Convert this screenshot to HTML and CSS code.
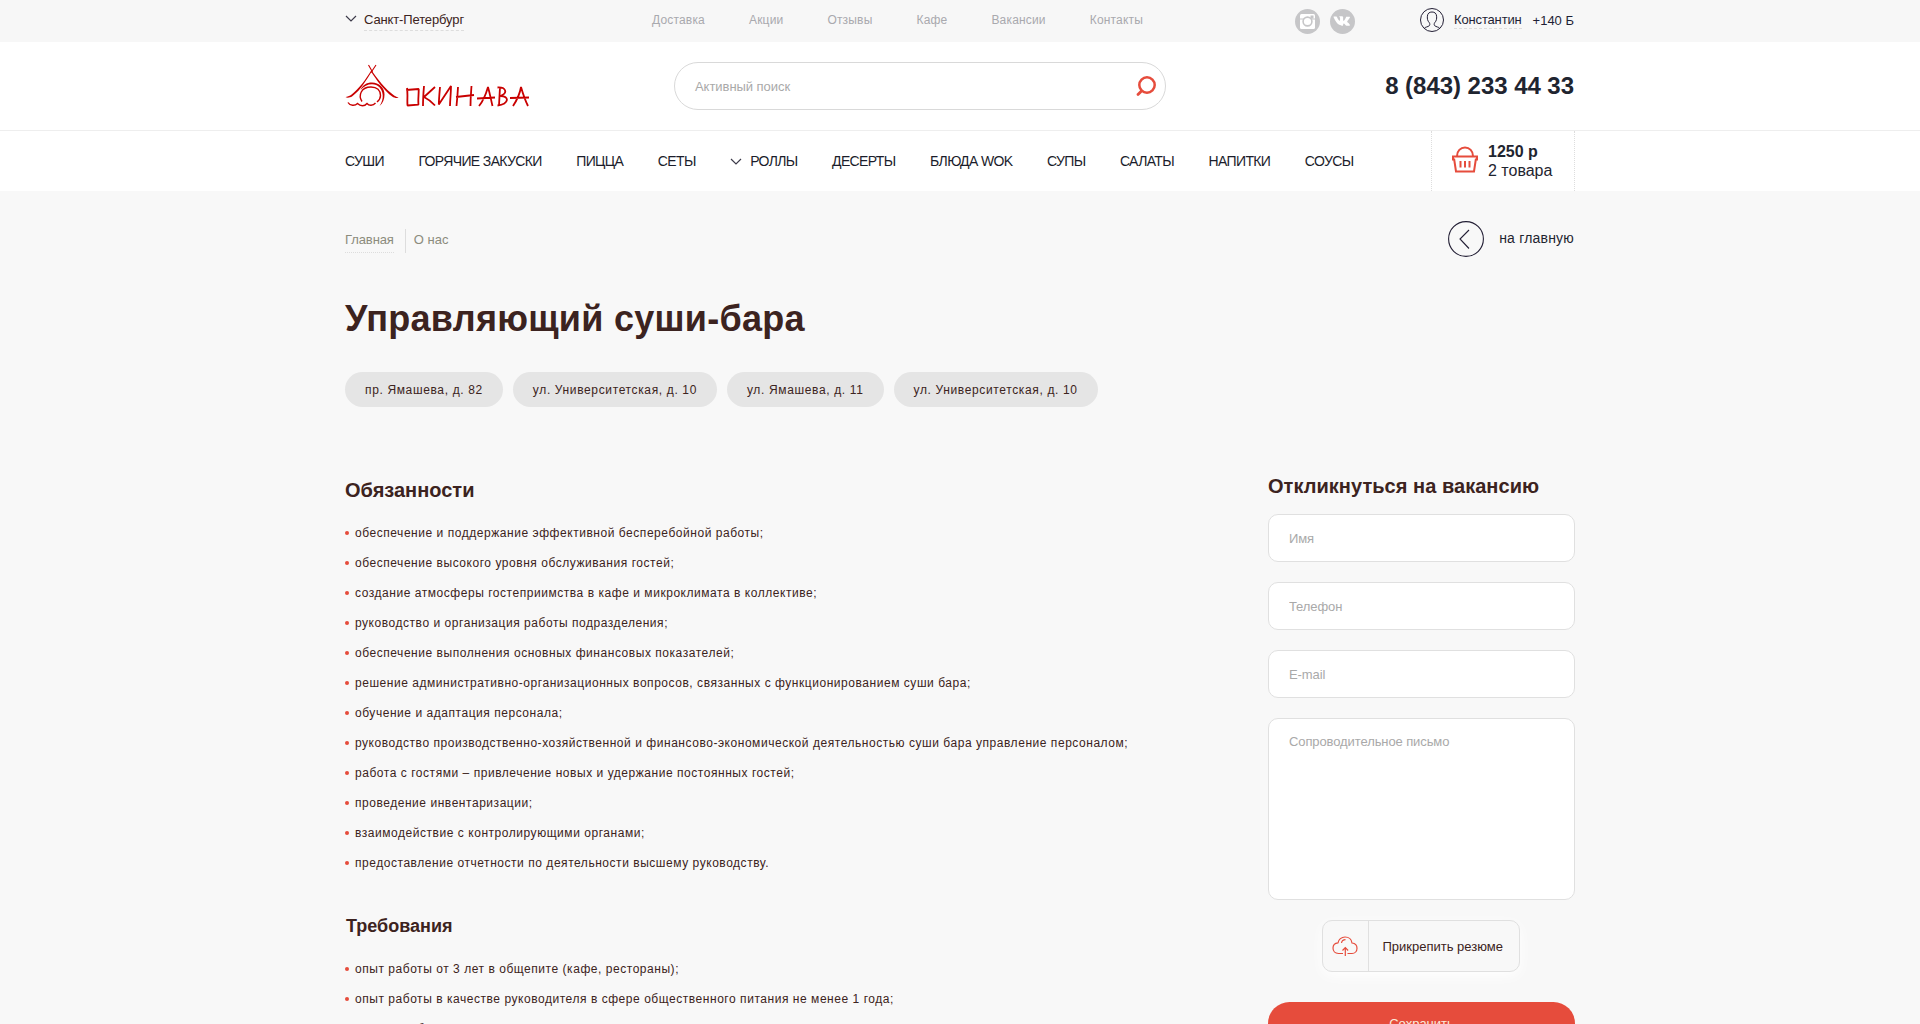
FILE: index.html
```html
<!DOCTYPE html>
<html lang="ru">
<head>
<meta charset="utf-8">
<title>Управляющий суши-бара</title>
<link rel="stylesheet" href="styles.css">
</head>
<body>
<div class="topbar">
  <div class="wrap topbar-row">
    <a class="city"><svg class="chev" width="12" height="8" viewBox="0 0 12 8"><path d="M1 1l5 5 5-5"/></svg><span class="city-name">Санкт-Петербург</span></a>
    <nav class="topnav"><a>Доставка</a><a>Акции</a><a>Отзывы</a><a>Кафе</a><a>Вакансии</a><a>Контакты</a></nav>
    <div class="social">
      <svg width="25" height="25" viewBox="0 0 25 25"><circle cx="12.5" cy="12.5" r="12.5" fill="#c6c6c8"/><rect x="5" y="5" width="15" height="15" rx="1.500" fill="#fff"/><path d="M5 10h4M16 10h4" stroke="#c6c6c8" stroke-width="1"/><circle cx="12.5" cy="12.500" r="4.400" fill="#fff" stroke="#c6c6c8" stroke-width="1.600"/><rect x="15.500" y="6.500" width="3" height="3" fill="#c6c6c8"/></svg>
      <svg width="25" height="25" viewBox="0 0 25 25"><circle cx="12.5" cy="12.5" r="12.5" fill="#c6c6c8"/><path transform="translate(.9 1.600) scale(.88)" fill="#fff" d="M12 17.200h1.200s.4 0 .5-.3c.2-.2.200-.5.200-.5s0-1.600.7-1.800c.7-.2 1.600 1.500 2.500 2.200.7.500 1.300.4 1.300.4l2.400 0s1.300-.1.7-1.100c-.1-.1-.4-.8-1.900-2.200-1.600-1.500-1.400-1.200.5-3.800 1.200-1.600 1.700-2.500 1.500-2.900-.1-.4-1-.3-1-.3l-2.800 0s-.2 0-.4.1c-.1.1-.2.3-.2.300s-.4 1.200-1 2.200c-1.200 2.100-1.700 2.200-1.900 2.100-.5-.3-.4-1.200-.4-1.900 0-2 .3-2.900-.6-3.100-.3-.1-.5-.1-1.300-.1-1 0-1.800 0-2.300.2-.3.2-.6.5-.4.5.2 0 .6.1.8.4.3.4.3 1.200.3 1.200s.2 2.400-.4 2.700c-.4.2-1-.2-2.100-2.200-.6-1-1-2.100-1-2.100s-.1-.2-.3-.3c-.2-.1-.4-.2-.4-.2l-2.700 0s-.4 0-.5.2c-.1.200 0 .5 0 .5s2.100 4.900 4.400 7.300c2.200 2.200 4.600 2.100 4.600 2.100z"/></svg>
    </div>
    <div class="user">
      <svg width="24" height="24" viewBox="0 0 24 24" fill="none" stroke="#231f35" stroke-width="1"><circle cx="12" cy="12" r="11.500"/><path d="M4.300 20.300c.8-1.300 3.800-1.400 5-2.600.7-.8.700-1.900 0-3-1.700-1.800-2.200-4-1.900-6.500.2-2.800 1.900-4.200 4.600-4.200s4.400 1.400 4.600 4.200c.3 2.500-.2 4.700-1.900 6.500-.7 1.100-.7 2.200 0 3 1.200 1.200 4.200 1.300 5 2.600"/></svg>
      <a class="user-name">Константин</a><span class="bonus">+140 Б</span>
    </div>
  </div>
</div>
<header class="header">
  <div class="wrap header-row">
    <svg class="logo" width="186" height="44" viewBox="0 0 186 44" fill="none" stroke="#c90000" role="img" aria-label="Окинава">
      <path stroke-width="1.100" d="M23.500 1l4 7M31 1c-2 3-3 4.500-5 7.500"/>
      <path fill="#c90000" stroke="none" d="M26.200 6.500C21 15 14 25 6 31c-2 1-3.500 1.600-5.500 2 1.500 1.200 4.500.7 6.500-.5C16 26 22 15 27 7zM25.700 7c5 8 13.500 20 21.500 25.500 2 1.300 4 1.800 6.400 1.300-1.500-.6-3-1.300-4.500-2.300C40 25 32 14 26.600 6.500z"/>
      <path fill="#c90000" stroke="none" d="M15.500 26c2-5 6-7.500 11.500-7.500 7 0 12.500 5 12.500 12 0 5-1.500 8.500-5 11.500 2.500-4 3.500-7 3.200-11C37.300 25 33 20.300 27 20.300c-4.500 0-8 2-11.500 5.700z"/>
      <path stroke-width="1.400" d="M17 37.500c-4-6-1-14.500 9-14.500 6 0 9.500 3.500 9.500 8.500 0 2.500-1 4.500-3.500 6.500"/>
      <path stroke-width="1.400" d="M3 38.500c2 3.500 7 3.500 9.500 1 3 3 7 3 9.500 0 2 2.500 6 2.500 8.500-.5"/>
      <path stroke-width="1.800" stroke-linejoin="bevel" d="M62 24c1 6 0 12 .5 17.500l11-.8c-.6-5 .3-10 .2-15.700l-12.500 1M79 22c-.6 7-1 13-1 20M90 23l-11 10c4 2 7 4 11 8.500M95 23c-.5 6-1 11-1.200 17.500L106 22c0 7-.8 12-1 20M113 23c-.3 6-.8 12-1.500 19M111 33l18-2M126.500 22c-.5 7-1 12-1 20M134 42c5-6 7-12 9-19 2 7 3 13 4.500 19M132 34.500l18-1M155 23l-1 18.500M152.500 23.500c8-.5 11 5 3 8.500 9 0 9 8-3 9.500M168 42c4-6 7-13 8-19 2 7 4 13 7 19M165 34l19-.5"/>
    </svg>
    <div class="search"><span>Активный поиск</span><svg width="20" height="21" viewBox="0 0 20 21" fill="none" stroke="#e64c3c"><circle cx="11" cy="9" r="7.700" stroke-width="2.500"/><path stroke-width="2.800" stroke-linecap="round" d="M5.500 15L2 18.500"/></svg></div>
    <div class="phone">8 (843) 233 44 33</div>
  </div>
</header>
<div class="menubar">
  <div class="wrap menu-row">
    <nav class="menu"><a>СУШИ</a><a>ГОРЯЧИЕ ЗАКУСКИ</a><a>ПИЦЦА</a><a>СЕТЫ</a><a class="sub"><svg class="chev" width="12" height="8" viewBox="0 0 12 8"><path d="M1 1l5 5 5-5"/></svg>РОЛЛЫ</a><a>ДЕСЕРТЫ</a><a>БЛЮДА WOK</a><a>СУПЫ</a><a>САЛАТЫ</a><a>НАПИТКИ</a><a>СОУСЫ</a></nav>
    <div class="cart">
      <svg width="26" height="27" viewBox="0 0 26 27" fill="none" stroke="#e64c3c" stroke-width="2"><path d="M5 10c0-5 3.500-8.500 8-8.500s8 3.500 8 8.500M0 10.500h26M1 10v3.500h1.200L4 25.500h18l1.800-12H25V10"/><path d="M8.500 15v6.500M13 15v6.500M17.500 15v6.500"/></svg>
      <div class="cart-text"><b>1250 р</b><span>2 товара</span></div>
    </div>
  </div>
</div>
<main class="wrap main">
  <div class="crumb-row">
    <div class="crumbs"><a>Главная</a><span>О нас</span></div>
    <a class="back"><svg width="36" height="36" viewBox="0 0 36 36" fill="none" stroke="#231f35" stroke-width="1.100"><circle cx="18" cy="18" r="17.400"/><path d="M21 9l-9 9 9 9.500"/></svg><span>на главную</span></a>
  </div>
  <h1>Управляющий суши-бара</h1>
  <div class="pills"><span>пр. Ямашева, д. 82</span><span>ул. Университетская, д. 10</span><span>ул. Ямашева, д. 11</span><span>ул. Университетская, д. 10</span></div>
  <div class="columns">
    <article class="text">
      <h2>Обязанности</h2>
      <ul>
        <li>обеспечение и поддержание эффективной бесперебойной работы;</li>
        <li>обеспечение высокого уровня обслуживания гостей;</li>
        <li>создание атмосферы гостеприимства в кафе и микроклимата в коллективе;</li>
        <li>руководство и организация работы подразделения;</li>
        <li>обеспечение выполнения основных финансовых показателей;</li>
        <li>решение административно-организационных вопросов, связанных с функционированием суши бара;</li>
        <li>обучение и адаптация персонала;</li>
        <li>руководство производственно-хозяйственной и финансово-экономической деятельностью суши бара управление персоналом;</li>
        <li>работа с гостями – привлечение новых и удержание постоянных гостей;</li>
        <li>проведение инвентаризации;</li>
        <li>взаимодействие с контролирующими органами;</li>
        <li>предоставление отчетности по деятельности высшему руководству.</li>
      </ul>
      <h3>Требования</h3>
      <ul>
        <li>опыт работы от 3 лет в общепите (кафе, рестораны);</li>
        <li>опыт работы в качестве руководителя в сфере общественного питания не менее 1 года;</li>
        <li>умение работать</li>
      </ul>
    </article>
    <form class="form">
      <h2>Откликнуться на вакансию</h2>
      <input type="text" placeholder="Имя">
      <input type="text" placeholder="Телефон">
      <input type="text" placeholder="E-mail">
      <textarea placeholder="Сопроводительное письмо"></textarea>
      <div class="attach"><span class="attach-icon"><svg width="26" height="20" viewBox="0 0 26 20" fill="none" stroke="#e64c3c" stroke-width="1.200"><path d="M11 17.500H6.500C3 17.500 1 15 1 12s2-5 5-5.200C6.500 3.500 9.500 1 13 1c3.800 0 6.500 2.500 7 6 3 .3 5 2.300 5 5.200s-2 5.300-5 5.300h-4.500"/><path d="M9.500 7c.3-2 2-3.300 4-3.300M13.300 20v-8M10.500 14.500l2.800-2.800 2.800 2.800"/></svg></span><span class="attach-label">Прикрепить резюме</span></div>
      <button type="button">Сохранить</button>
    </form>
  </div>
</main>
</body>
</html>
```
FILE: styles.css
```css
* { box-sizing: border-box; }
html { overflow: hidden; }
body { margin: 0; height: 1024px; overflow: hidden; background: #f8f8f8; color: #3c2320; font: 13px/16px "Liberation Sans", Arial, sans-serif; }
svg { display: block; flex: none; }
.wrap { width: 1230px; margin: 0 auto; padding-right: 1px; }
.topbar { height: 42px; background: #f7f7f7; }
.topbar-row { display: flex; height: 42px; align-items: flex-start; white-space: nowrap; }
.chev { fill: none; stroke: #3d3b4a; stroke-width: 1.2; }
.city { display: flex; gap: 7px; width: 307px; padding-top: 12px; color: #3c2320; }
.city .chev { margin-top: 3px; }
.city-name { height: 19px; border-bottom: 1px dashed #ddd; font-size: 13px; letter-spacing: -.13px; }
.topnav { display: flex; gap: 44px; width: 643px; padding-top: 12px; color: #a9a9ae; font-size: 12px; letter-spacing: .18px; }
.social { display: flex; gap: 10px; width: 125px; padding-top: 9px; }
.user { display: flex; width: 154px; padding-top: 8px; color: #1f1f35; }
.user-name { margin-left: 10px; margin-top: 4px; height: 17px; border-bottom: 1px dashed #ddd; letter-spacing: -.15px; }
.bonus { margin-left: auto; margin-top: 5px; }
.header { height: 89px; background: #fff; border-bottom: 1px solid #eee; }
.header-row { display: flex; align-items: flex-start; }
.logo { margin-top: 22px; }
.search { display: flex; justify-content: space-between; align-items: center; width: 492px; height: 48px; margin: 20px 0 0 143px; padding: 0 9px 0 20px; border: 1px solid #d9d9d9; border-radius: 24px; color: #a9a9a9; }
.search span { padding-top: 1px; letter-spacing: -.05px; }
.phone { margin: 30px 0 0 auto; color: #1f2530; font-weight: bold; font-size: 24px; line-height: 28px; letter-spacing: -.04px; }
.menubar { height: 60px; background: #fff; }
.menu-row { display: flex; justify-content: space-between; height: 60px; }
.menu { display: flex; gap: 34.5px; padding-top: 22px; color: #1b1d2b; font-size: 14px; letter-spacing: -.63px; white-space: nowrap; }
.sub { display: flex; gap: 8px; }
.sub .chev { margin-top: 5px; }
.cart { display: flex; width: 144px; margin-right: -1px; padding: 11px 0 0 20px; border: dotted #ddd; border-width: 0 1px; color: #1f2530; font-size: 16px; line-height: 19px; }
.cart svg { margin-top: 4px; }
.cart-text { display: flex; flex-direction: column; margin-left: 10px; }
.crumb-row { display: flex; justify-content: space-between; padding-top: 30px; height: 66px; }
.crumbs { display: flex; padding-top: 8px; height: 32px; color: #8c8c7d; }
.crumbs a { height: 24px; padding-top: 3px; border-bottom: 1px dotted #ddd; letter-spacing: -.1px; }
.crumbs span { height: 24px; margin-left: 11px; padding: 3px 0 0 8px; border-left: 1px solid #ddd; }
.back { display: flex; gap: 15px; color: #1f2530; font-size: 14px; letter-spacing: .2px; }
.back span { padding-top: 9px; }
h1, h2, h3 { margin: 0; font-weight: bold; white-space: nowrap; }
h1 { margin-top: 41px; font-size: 36px; line-height: 42px; letter-spacing: .27px; }
.pills { display: flex; gap: 10px; margin-top: 32px; }
.pills span { height: 35px; padding: 0 20px; border-radius: 18px; background: #e5e5e5; font-size: 12px; line-height: 36px; letter-spacing: .64px; white-space: nowrap; }
.columns { display: flex; justify-content: space-between; margin-top: 67px; }
.text h2 { margin-top: 4px; font-size: 20px; line-height: 24px; }
.text h3 { padding: 37px 0 0 1px; font-size: 18px; line-height: 22px; }
ul { margin: 16px 0 0; padding: 0; list-style: none; }
h3 + ul { margin-top: 17px; }
li { display: flex; align-items: center; gap: 6px; height: 30px; font-size: 12px; letter-spacing: .54px; white-space: nowrap; }
li::before { content: ""; width: 4px; height: 4px; border-radius: 50%; background: #e64c3c; }
.form { width: 307px; margin-right: -1px; display: flex; flex-direction: column; gap: 20px; }
.form h2 { font-size: 20px; line-height: 24px; letter-spacing: .04px; margin-bottom: -4px; }
input, textarea { display: block; width: 100%; height: 48px; margin: 0; padding: 0 20px; border: 1px solid #e0e0e0; border-radius: 10px; background: #fff; font: 13px/16px "Liberation Sans", Arial, sans-serif; letter-spacing: -.1px; resize: none; }
textarea { height: 182px; padding-top: 15px; }
::placeholder { color: #a9a9a9; }
.attach { display: flex; align-self: center; width: 198px; height: 52px; margin-right: 2px; border: 1px solid #e0e0e0; border-radius: 10px; box-shadow: 0 4px 14px #fff; }
.attach-icon { display: flex; align-items: center; justify-content: center; width: 46px; border-right: 1px solid #e0e0e0; }
.attach-label { padding: 18px 0 0 14px; white-space: nowrap; }
button { height: 43px; margin-top: 10px; border: 0; border-radius: 21.5px; background: #e64c3c; color: #fbeadb; font: 13px/16px "Liberation Sans", Arial, sans-serif; }
```
